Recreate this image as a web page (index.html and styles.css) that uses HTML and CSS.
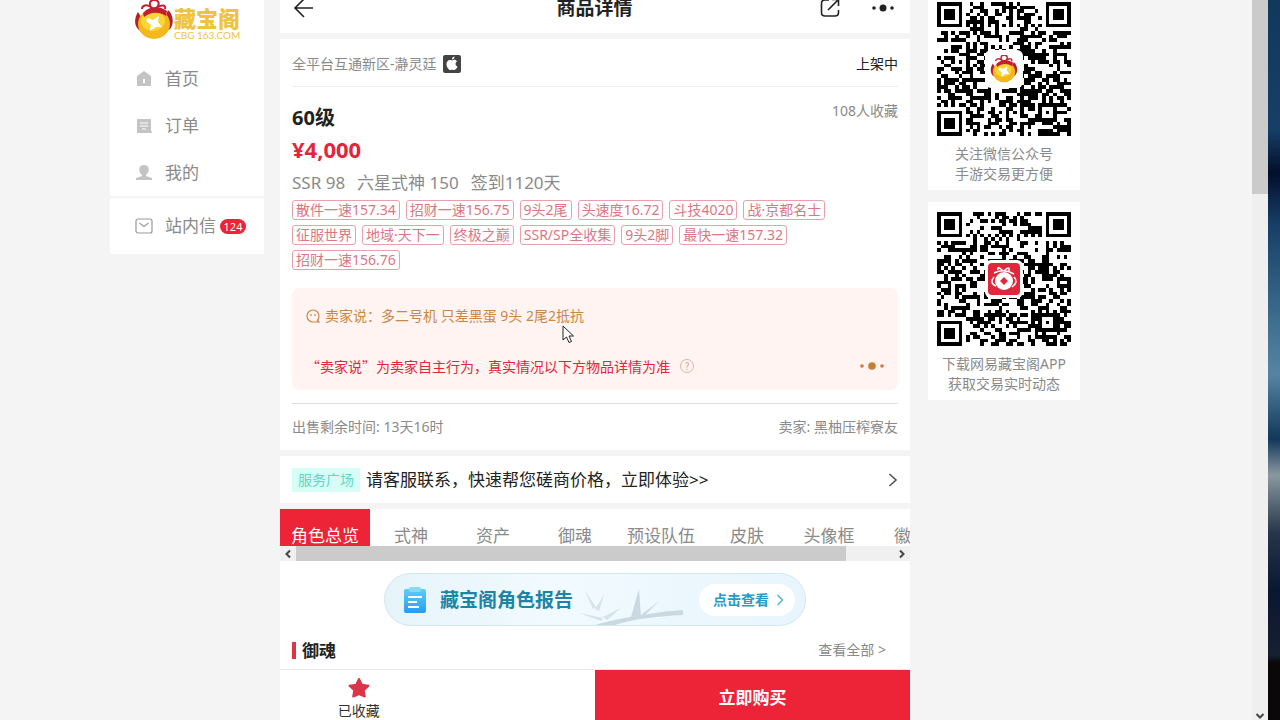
FILE: index.html
```html
<!DOCTYPE html>
<html lang="zh-CN">
	<head>
		<meta charset="UTF-8">
		<meta name="viewport" content="width=device-width, initial-scale=1">
		<link rel="stylesheet" href="styles.css">
		<title>商品详情</title>
	</head>
	<body>
		<svg class="defs" width="0" height="0">
			<symbol id="bag" viewBox="0 0 40 40">
				<path d="M4 12C0 18 0 26 5 30L11 34 9 20ZM34 10C40 15 40 25 36 29L30 33 31 18Z" fill="#b51f2d"/>
				<ellipse cx="20" cy="24" rx="16" ry="15" fill="#f5b81c"/>
				<ellipse cx="19" cy="21" rx="12" ry="10" fill="#fbd535"/>
				<path d="M9 13C16 6 24 5 33 11L32 16C24 11 17 12 10 17Z" fill="#c3202f"/>
				<path d="M20 9C14 7 15 0 20 0S27 5 21 9M18 8C12 3 8 6 8 9M22 8C28 4 32 5 31 9" fill="none" stroke="#c3202f" stroke-width="2"/>
				<path d="M14 18L19 20 25 16 24 22 28 27 22 27 16 31 17 25 12 21Z" fill="#fff"/>
			</symbol>
		</svg>
		<div class="browser">
			<div class="page">
				<nav class="sidebar">
					<a class="logo" href="#">
						<svg class="logo-bag"><use href="#bag"/></svg>
						<span class="logo-text"><b>藏宝阁</b><small>CBG 163.COM</small></span>
					</a>
					<a class="nav-item" href="#">
						<svg viewBox="0 0 18 18"><path d="M9 1L16 6V8H16V16H2V8H2V6Z" fill="#c4c4c4"/><path d="M9 9V13" stroke="#fff" stroke-width="2"/></svg>
						首页
					</a>
					<a class="nav-item" href="#">
						<svg viewBox="0 0 18 18"><path d="M2 2H16V13L17 16H2Z" fill="#c4c4c4"/><path d="M5 6H13M5 9H13M7 12H11" stroke="#fff"/></svg>
						订单
					</a>
					<a class="nav-item" href="#">
						<svg viewBox="0 0 18 18"><path d="M9 1C15 1 15 8 11 11V12L17 14V16H1V14L7 12V11C3 8 3 1 9 1Z" fill="#c4c4c4"/></svg>
						我的
					</a>
					<a class="nav-item message" href="#">
						<svg viewBox="0 0 18 18" fill="none" stroke="#999" stroke-width="1.2"><rect x="1" y="2" width="16" height="14" rx="2"/><path d="M4.500 6L9 9.500 13.500 6"/></svg>
						站内信<span class="count">124</span>
					</a>
				</nav>

				<main class="main">
					<header class="topbar">
						<button type="button" aria-label="返回">
							<svg width="22" height="22" viewBox="0 0 22 22" fill="none" stroke="#222" stroke-width="1.600"><path d="M20 11H2.500M11 2L2 11 11 20"/></svg>
						</button>
						<h1>商品详情</h1>
						<div class="tools">
							<button type="button" aria-label="分享">
								<svg width="20" height="20" viewBox="0 0 20 20" fill="none" stroke="#222" stroke-width="1.600"><path d="M9 2H5Q1.500 2 1.500 5.500V14.500Q1.500 18 5 18H15Q18.500 18 18.500 14.500V12M8 12L18 2M12 1.500H18.500V8"/></svg>
							</button>
							<button type="button" aria-label="更多">
								<svg width="22" height="8" viewBox="0 0 22 8" fill="#222"><circle cx="2" cy="4" r="1.800"/><circle cx="11" cy="4" r="3.500"/><circle cx="20" cy="4" r="1.800"/></svg>
							</button>
						</div>
					</header>

					<section class="goods">
						<div class="server">
							<span>全平台互通新区-瀞灵廷</span>
							<svg width="18" height="18" viewBox="0 0 18 18"><rect width="18" height="18" rx="2" fill="#444"/><path d="M9 5.500C6 4 3.500 6 3.500 9S6 15.500 7.500 15 9 14.500 10 15C12 15.500 14 13.500 14.500 11.500 12 10.500 12 7.500 14 6.500 13 4.500 11 4.500 9 5.500ZM9 4.500C9 2.500 10 1.500 11.500 1.500 11.500 3.500 10.500 4.500 9 4.500Z" fill="#fff"/></svg>
							<span class="status">上架中</span>
						</div>
						<div class="level"><h2>60级</h2><span>108人收藏</span></div>
						<div class="price">¥4,000</div>
						<div class="desc"><span>SSR 98</span><span>六星式神 150</span><span>签到1120天</span></div>
						<ul class="tags">
							<li>散件一速157.34</li>
							<li>招财一速156.75</li>
							<li>9头2尾</li>
							<li>头速度16.72</li>
							<li>斗技4020</li>
							<li>战·京都名士</li>
							<li>征服世界</li>
							<li>地域·天下一</li>
							<li>终极之巅</li>
							<li>SSR/SP全收集</li>
							<li>9头2脚</li>
							<li>最快一速157.32</li>
							<li>招财一速156.76</li>
						</ul>
						<div class="seller-say">
							<p>
								<svg width="14" height="14" viewBox="0 0 14 14" fill="none" stroke="#c98743" stroke-width="1.200"><path d="M13 13H7A6 6 0 1 1 13 7Q13 10 11.500 11.500ZM5 5V7M9 5V7"/></svg>
								卖家说：多二号机 只差黑蛋 9头 2尾2抵抗
							</p>
							<p class="notice">
								<span>“卖家说”为卖家自主行为，真实情况以下方物品详情为准</span>
								<button class="help" type="button" aria-label="说明">?</button>
								<button class="more" type="button" aria-label="展开">
									<svg width="24" height="8" viewBox="0 0 24 8" fill="#cb7c35"><circle cx="2" cy="4" r="1.800"/><circle cx="12" cy="4" r="3.800"/><circle cx="22" cy="4" r="1.800"/></svg>
								</button>
							</p>
						</div>
						<div class="sale"><span>出售剩余时间: 13天16时</span><span>卖家: 黑柚压榨寮友</span></div>
					</section>

					<a class="service" href="#">
						<span class="label">服务广场</span>
						<span>请客服联系，快速帮您磋商价格，立即体验&gt;&gt;</span>
						<svg width="10" height="16" viewBox="0 0 10 16" fill="none" stroke="#555" stroke-width="1.600"><path d="M1.500 2L8 8 1.500 14"/></svg>
					</a>

					<div class="tabs">
						<button class="active" type="button">角色总览</button>
						<button type="button">式神</button>
						<button type="button">资产</button>
						<button type="button">御魂</button>
						<button type="button">预设队伍</button>
						<button type="button">皮肤</button>
						<button type="button">头像框</button>
						<button type="button">徽章</button>
					</div>
					<div class="scroll-x">
						<svg viewBox="0 0 16 16"><path d="M10 4.500L6.500 8 10 11.500"/></svg>
						<div class="track"><div class="thumb"></div></div>
						<svg viewBox="0 0 16 16"><path d="M6 4.500L9.500 8 6 11.500"/></svg>
					</div>

					<section class="overview">
						<a class="report" href="#">
							<svg class="branch" viewBox="0 0 110 50" fill="#c9d8e1">
								<path d="M16 50Q50 40 104 35V40Q60 42 36 50Z"/>
								<path d="M52 42L60 14 62 42ZM56 42L40 26 54 40ZM62 40L80 26 64 42ZM64 42L92 35 70 43Z"/>
								<path d="M14 34L6 16 17 32ZM16 34L25 20 20 36ZM22 46L0 38 24 43ZM24 42L42 33 28 45Z" opacity=".7"/>
							</svg>
							<svg width="24" height="28" viewBox="0 0 24 28">
								<defs><linearGradient id="clip" x2="0" y2="1"><stop stop-color="#60cdf5"/><stop offset="1" stop-color="#279cf0"/></linearGradient></defs>
								<rect x="1" y="3" width="22" height="24" rx="2" fill="url(#clip)"/><rect x="6" y="1" width="12" height="5" rx="2" fill="#86d9f5"/>
								<path d="M5 11H19M5 16H14M5 21H16" stroke="#fff" stroke-width="2"/>
							</svg>
							<strong>藏宝阁角色报告</strong>
							<span class="view">点击查看
								<svg width="8" height="12" viewBox="0 0 8 12" fill="none" stroke="#55b5d6" stroke-width="1.500"><path d="M1.500 1L6.500 6 1.500 11"/></svg>
							</span>
						</a>
						<div class="section-head"><h3>御魂</h3><a href="#">查看全部 &gt;</a></div>
					</section>

					<footer class="actions">
						<button class="collect" type="button">
							<svg width="24" height="22" viewBox="0 0 24 22"><path d="M12 2L14.800 7.800 21.500 8.700 16.700 13.200 17.800 19.500 12 17 6.200 19.500 7.300 13.200 2.500 8.700 9.200 7.800Z" fill="#dc3548" stroke="#dc3548" stroke-width="2" stroke-linejoin="round"/></svg>
							已收藏
						</button>
						<button class="buy" type="button">立即购买</button>
					</footer>
				</main>

				<aside class="codes">
					<figure>
						<div class="qr">
							<svg class="qr-code" data-seed="163" viewBox="0 0 37 37"></svg>
							<span class="qr-logo"><svg><use href="#bag"/></svg></span>
						</div>
						<figcaption>关注微信公众号<br>手游交易更方便</figcaption>
					</figure>
					<figure>
						<div class="qr">
							<svg class="qr-code" data-seed="921" viewBox="0 0 37 37"></svg>
							<span class="qr-logo app">
								<svg viewBox="0 0 32 32"><rect width="32" height="32" rx="4" fill="#e1273c"/><circle cx="16" cy="18" r="9" fill="#fff"/><path d="M16 14L20 18 16 22 12 18Z" fill="#e1273c"/><path d="M6 10Q16 5 26 11M15 8Q9 2 10 7M16 8Q22 2 21 8M6 14Q1 20 8 23M26 14Q31 19 24 24" fill="none" stroke="#fff" stroke-width="1.500"/></svg>
							</span>
						</div>
						<figcaption>下载网易藏宝阁APP<br>获取交易实时动态</figcaption>
					</figure>
				</aside>
			</div>
			<svg class="cursor" width="14" height="20" viewBox="0 0 14 20"><path d="M1 1V15L4.500 12 7 17.500 9.500 16.500 7 11H11.500Z" fill="#fff" stroke="#222"/></svg>
		</div>
		<div class="scroll-y">
			<div class="thumb"></div>
			<svg viewBox="0 0 16 16"><path d="M4.500 10L8 13.500 11.500 10"/></svg>
		</div>
		<div class="desktop"></div>
		<script src="script.js"></script>
	</body>
</html>
```
FILE: styles.css
```css
* {
	box-sizing: border-box;
}
body {
	display: flex;
	height: 100vh;
	margin: 0;
	overflow: hidden;
	background: #f4f4f4;
	color: #8a8a8a;
	font: 14px/20px "Noto Sans", "Noto Sans CJK SC", sans-serif;
}
h1, h2, h3, p, ul, figure {
	margin: 0;
	padding: 0;
}
a {
	color: inherit;
	text-decoration: none;
}
button {
	padding: 0;
	border: 0;
	background: none;
	color: inherit;
	font: inherit;
	cursor: pointer;
}
svg {
	flex: none;
	display: block;
}
.defs {
	position: absolute;
}
.browser {
	position: relative;
	flex: 1;
	min-width: 0;
}
.page {
	display: flex;
	align-items: flex-start;
	height: 100%;
	padding: 0 172px 0 110px;
}

/* left menu */
.sidebar {
	width: 154px;
	margin-right: 16px;
	background: #fff;
	font-size: 17px;
}
.logo {
	display: flex;
	height: 55px;
	padding-left: 24px;
}
.logo-bag {
	width: 40px;
	height: 40px;
}
.logo-text {
	padding-top: 7px;
	color: #f0c33c;
}
.logo-text b {
	display: block;
	font-size: 22px;
	font-weight: 900;
	line-height: 22px;
}
.logo-text small {
	display: block;
	font: 10px/12px Lato, sans-serif;
}
.nav-item {
	display: flex;
	align-items: center;
	height: 47px;
	padding-left: 25px;
}
.nav-item svg {
	width: 18px;
	height: 18px;
	margin-right: 12px;
}
.message {
	height: 58px;
	border-top: 2px solid #f4f4f4;
}
.count {
	width: 26px;
	margin-left: 4px;
	border-radius: 8px;
	background: #ec2436;
	color: #fff;
	font-size: 11px;
	line-height: 15px;
	text-align: center;
}

/* goods detail */
.main {
	display: flex;
	flex: 1;
	flex-direction: column;
	min-width: 0;
	height: 100%;
	gap: 6px;
}
.topbar {
	display: flex;
	flex: none;
	align-items: center;
	justify-content: space-between;
	height: 50px;
	margin-top: -17px;
	padding: 0 16px 0 13px;
	background: #fff;
	color: #222;
}
.topbar h1 {
	margin-left: 54px;
	font-size: 19px;
}
.tools {
	display: flex;
	align-items: center;
	gap: 32px;
}
.goods {
	flex: none;
	padding: 0 12px;
	background: #fff;
}
.server {
	display: flex;
	align-items: center;
	height: 48px;
	padding-top: 2px;
	gap: 6px;
	border-bottom: 1px solid #eee;
}
.status {
	margin-left: auto;
	color: #222;
}
.level {
	display: flex;
	align-items: flex-start;
	justify-content: space-between;
	padding-top: 14px;
}
.level h2 {
	padding-top: 2px;
	color: #222;
	font-size: 20px;
	line-height: 29px;
}
.price {
	color: #e2253a;
	font-size: 22px;
	font-weight: bold;
	line-height: 34px;
}
.desc {
	display: flex;
	gap: 12px;
	font-size: 17px;
	line-height: 34px;
}
.tags {
	display: flex;
	flex-wrap: wrap;
	padding-right: 60px;
	gap: 5px 6px;
	list-style: none;
}
.tags li {
	padding: 0 3px;
	border: 1px solid #e8a0aa;
	border-radius: 3px;
	color: #dc7683;
	line-height: 18px;
}
.seller-say {
	margin: 18px 0 13px;
	padding: 18px 14px 14px;
	border-radius: 8px;
	background: #fff4f2;
	color: #c98743;
}
.seller-say p {
	display: flex;
	align-items: center;
	gap: 5px;
}
.seller-say .notice {
	margin-top: 30px;
	gap: 10px;
	color: #e2253a;
	font-family: "Noto Sans CJK SC", sans-serif;
}
.help {
	width: 14px;
	height: 14px;
	border: 1px solid #d8b8a8;
	border-radius: 50%;
	color: #d0a890;
	font-size: 10px;
	line-height: 12px;
}
.more {
	margin-left: auto;
}
.sale {
	display: flex;
	align-items: center;
	justify-content: space-between;
	height: 47px;
	border-top: 1px solid #ddd;
}
.service {
	display: flex;
	flex: none;
	align-items: center;
	height: 47px;
	padding: 0 12px;
	gap: 6px;
	background: #fff;
	color: #222;
	font-size: 17px;
}
.service svg {
	margin-left: auto;
}
.label {
	padding: 0 6px;
	background: #d7fdf7;
	color: #62d5c4;
	font-size: 14px;
	line-height: 24px;
}
.tabs {
	display: flex;
	flex: none;
	height: 37px;
	overflow: hidden;
	background: #fff;
}
.tabs button {
	flex: none;
	min-width: 82px;
	height: 54px;
	padding: 0 11px;
	font-size: 17px;
}
.tabs .active {
	background: #ed2437;
	color: #fff;
}
.scroll-x {
	display: flex;
	flex: none;
	height: 15px;
	margin-top: -6px;
	background: #f0f0f0;
}
.scroll-x svg, .scroll-y svg {
	width: 16px;
	height: 16px;
	fill: none;
	stroke: #444;
	stroke-width: 2;
}
.track {
	flex: 1;
}
.track .thumb {
	width: 92%;
	height: 100%;
	background: #cbcbcb;
}
.overview {
	flex: 1;
	min-height: 0;
	margin: -6px 0;
	padding: 12px 12px 0;
	overflow: hidden;
	background: #fff;
}
.report {
	position: relative;
	display: flex;
	align-items: center;
	max-width: 422px;
	height: 53px;
	margin: 0 auto;
	padding: 0 10px 0 18px;
	gap: 13px;
	border: 1px solid #cfe8f2;
	border-radius: 27px;
	background: linear-gradient(90deg, #e6f4fa, #f1faff 40%, #e8f5fc);
	color: #1c84a6;
}
.branch {
	position: absolute;
	right: 116px;
	bottom: 0;
	width: 110px;
	height: 50px;
}
.report strong {
	position: relative;
	font-size: 19px;
}
.view {
	display: flex;
	align-items: center;
	height: 32px;
	margin-left: auto;
	padding: 0 11px 0 14px;
	gap: 7px;
	border-radius: 16px;
	background: #fff;
	color: #279cc4;
	font-weight: bold;
}
.section-head {
	display: flex;
	align-items: center;
	justify-content: space-between;
	padding: 14px 12px 0 0;
}
.section-head h3 {
	padding-left: 6px;
	border-left: 4px solid #dc3548;
	color: #222;
	font-size: 17px;
	line-height: 17px;
}
.actions {
	display: flex;
	flex: none;
	height: 51px;
	border-top: 1px solid #e8e8e8;
	background: #fff;
}
.collect {
	display: flex;
	flex-direction: column;
	align-items: center;
	width: 25%;
	padding-top: 7px;
	gap: 3px;
	color: #333;
	line-height: 18px;
}
.buy {
	width: 50%;
	margin-left: auto;
	padding-top: 6px;
	background: #ed2437;
	color: #fff;
	font-size: 17px;
	font-weight: bold;
}

/* qr codes */
.codes {
	display: flex;
	flex-direction: column;
	width: 152px;
	margin: -8px 0 0 18px;
	gap: 12px;
}
.codes figure {
	height: 198px;
	padding-top: 10px;
	background: #fff;
	text-align: center;
}
.qr {
	display: grid;
	place-items: center;
	width: 134px;
	height: 134px;
	margin: 0 auto 8px;
}
.qr > * {
	grid-area: 1 / 1;
}
.qr-code {
	width: 100%;
	height: 100%;
}
.qr-logo {
	padding: 5px;
	border-radius: 6px;
	background: #fff;
}
.qr-logo svg {
	width: 28px;
	height: 28px;
}
.qr-logo.app {
	padding: 3px;
}
.qr-logo.app svg {
	width: 32px;
	height: 32px;
}

.cursor {
	position: absolute;
	top: 325px;
	left: 562px;
}
.scroll-y {
	display: flex;
	flex-direction: column;
	justify-content: space-between;
	width: 16px;
	background: #efefef;
}
.scroll-y .thumb {
	height: 27%;
	background: #cbcbcb;
}
.desktop {
	width: 12px;
	background: linear-gradient(#12385c, #173e66 18%, #020f2c 24%, #173e66 31%, #3e7090 45%, #5685a2 52%, #12385a 61%, #8a989f 66%, #26364a 74%, #0a1730 82%, #172033 91%, #0a0808 92%);
}
```
FILE: script.js
```js
(function(){
	'use strict'

	var SIZE = 37;

	/* finder patterns in three corners, small one near the fourth */
	function pattern(x, y){
		var corners = [[3, 3, 3], [33, 3, 3], [3, 33, 3], [30, 30, 2]];
		for(var i = 0; i < corners.length; i++){
			var c = corners[i];
			var d = Math.max(Math.abs(x - c[0]), Math.abs(y - c[1]));
			if(d <= c[2]){
				return c[2] == 3 ? d != 2 : d != 1;
			}
			if(c[2] == 3 && d == 4){
				return false;
			}
		}
		return null;
	}

	function draw(svg){
		var seed = Number(svg.dataset.seed);
		var path = '';
		for(var y = 0; y < SIZE; y++){
			for(var x = 0; x < SIZE; x++){
				seed = (seed * 16807) % 2147483647;
				var on = pattern(x, y);
				if(on === null){
					on = x == 6 || y == 6 ? (x + y) % 2 == 0 : seed / 2147483647 < 0.5;
				}
				if(on){
					path += 'M' + x + ' ' + y + 'h1v1h-1z';
				}
			}
		}
		svg.innerHTML = '<path shape-rendering="crispEdges" d="' + path + '"/>';
	}

	document.querySelectorAll('.qr-code').forEach(draw);
})();
```
